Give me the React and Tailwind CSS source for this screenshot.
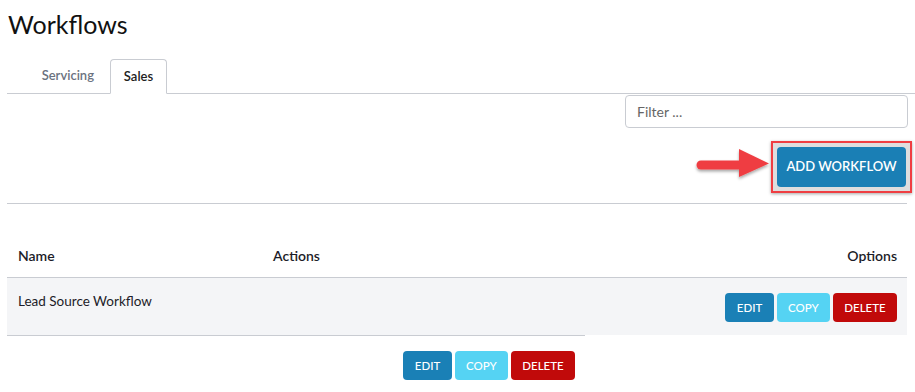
import React from "react";

function Arrow() {
  return (
    <svg width="80" height="40" viewBox="0 0 80 40" className="block">
      <defs>
        <filter id="sh" x="-20%" y="-30%" width="140%" height="170%">
          <feDropShadow dx="0" dy="2" stdDeviation="1.5" floodColor="#000" floodOpacity="0.35" />
        </filter>
      </defs>
      <g filter="url(#sh)" fill="#ef3e42">
        <path d="M8 15.5 L48 15.5 L48 24.5 L8 24.5 A4.5 4.5 0 0 1 8 15.5 Z" />
        <path d="M46 4 L76 18.5 L46 32 Z" />
      </g>
    </svg>
  );
}

function RowButtons() {
  return (
    <div className="flex gap-[3px]">
      <button className="h-[29px] w-[49px] rounded bg-[#1a80b6] text-[11.5px] font-medium text-white">
        EDIT
      </button>
      <button className="h-[29px] w-[53px] rounded bg-[#55d3f3] text-[11.5px] font-medium text-white">
        COPY
      </button>
      <button className="h-[29px] w-[64px] rounded bg-[#c10a0a] text-[11.5px] font-medium text-white">
        DELETE
      </button>
    </div>
  );
}

export default function App() {
  return (
    <div
      className="h-[392px] w-[915px] overflow-hidden bg-white text-[#1c1c28]"
      style={{ fontFamily: '"Source Sans Pro", Lato, sans-serif' }}
    >
      <h1 className="pl-[8px] pt-[8px] text-[25px] leading-[32px] text-[#111]">Workflows</h1>

      <div className="mt-[19px] ml-[7px] flex h-[35px] items-end border-b border-[#c9ccd2]">
        <div className="flex h-[34px] w-[103px] items-center justify-end pr-[16px] text-[13px] font-semibold text-[#6b7280]">
          Servicing
        </div>
        <div className="-mb-px flex h-[35px] w-[57px] items-center justify-center rounded-t border border-b-white border-[#c9ccd2] bg-white text-[13px] font-semibold text-[#222]">
          Sales
        </div>
      </div>

      <div className="flex justify-end pr-[7px]">
        <input
          placeholder="Filter ..."
          className="mt-[1px] h-[33px] w-[283px] rounded border border-[#c9ccd2] px-[11px] text-[14px] text-[#444] placeholder:text-[#666]"
        />
      </div>

      <div className="mt-[13px] flex items-center justify-end pr-[3px]">
        <div className="mr-[-2px] mt-[-4px]">
          <Arrow />
        </div>
        <div className="border-2 border-[#ef3e42] bg-[#dedede] p-[4px] shadow-[0_1px_3px_rgba(0,0,0,0.35)]">
          <button className="h-[40px] w-[129px] rounded bg-[#1a7fb5] text-[13px] font-semibold text-white">
            ADD WORKFLOW
          </button>
        </div>
      </div>

      <div className="ml-[7px] mr-[8px] mt-[10px] border-t border-[#c9ccd2]" />

      <div className="ml-[7px] mr-[8px] mt-[38px]">
        <div className="flex h-[36px] items-start border-b border-[#c9ccd2] pt-[4px] text-[14px] font-semibold leading-[20px]">
          <div className="w-[266px] pl-[11px]">Name</div>
          <div className="flex-1">Actions</div>
          <div className="pr-[10px]">Options</div>
        </div>
        <div className="flex h-[57px] items-start bg-[#f4f5f7]">
          <div className="flex-1 pl-[11px] pt-[13px] text-[13.5px] leading-[20px]">Lead Source Workflow</div>
          <div className="pr-[10px] pt-[15px]">
            <RowButtons />
          </div>
        </div>
        <div className="w-[578px] border-t border-[#c9ccd2]" />
        <div className="ml-[396px] mt-[15px]">
          <RowButtons />
        </div>
      </div>
    </div>
  );
}
